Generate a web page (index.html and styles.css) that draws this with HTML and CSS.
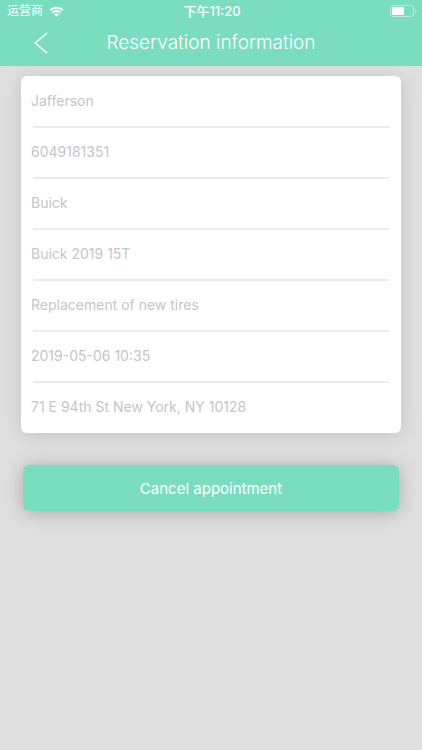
FILE: index.html
```html
<!DOCTYPE html>
<html lang="en">
<head>
    <meta charset="UTF-8">
    <meta name="viewport" content="width=device-width, initial-scale=1.0">
    <title>Reservation information</title>
    <link rel="stylesheet" href="styles.css">
</head>
<body>
    <header class="header">
        <div class="status-bar">
            <div class="carrier">
                <span lang="zh">运营商</span>
                <svg class="wifi" width="15" height="11" viewBox="0 0 15 11" aria-hidden="true">
                    <path d="M7.5 10.8 5.2 8.4a3.3 3.3 0 0 1 4.6 0z" fill="#fff"/>
                    <path d="M3.5 6.7a5.7 5.7 0 0 1 8 0M1.2 4.2a9 9 0 0 1 12.6 0" fill="none" stroke="#fff" stroke-width="2"/>
                </svg>
            </div>
            <div class="clock" lang="zh">下午11:20</div>
            <div class="power">
                <svg width="27" height="12" viewBox="0 0 27 12" aria-hidden="true">
                    <rect x="0.5" y="0.5" width="23" height="11" rx="2.5" fill="none" stroke="#fff" stroke-opacity="0.45"/>
                    <rect x="2" y="2" width="12" height="8" rx="1" fill="#fff"/>
                    <path d="M25 4v4c1 0 1.6-1 1.6-2S26 4 25 4z" fill="#fff" fill-opacity="0.45"/>
                </svg>
            </div>
        </div>
        <div class="nav-bar">
            <button class="back" type="button" aria-label="Back">
                <svg width="14" height="22" viewBox="0 0 14 22" aria-hidden="true">
                    <path d="M13 1 1.2 11 13 21" fill="none" stroke="#fff" stroke-width="1.6"/>
                </svg>
            </button>
            <h1 class="title">Reservation information</h1>
        </div>
    </header>

    <main class="content">
        <form class="reservation">
            <div class="card">
                <div class="field"><input type="text" aria-label="Name" value="Jafferson" readonly></div>
                <div class="field"><input type="text" aria-label="Phone" value="6049181351" readonly></div>
                <div class="field"><input type="text" aria-label="Brand" value="Buick" readonly></div>
                <div class="field"><input type="text" aria-label="Model" value="Buick 2019 15T" readonly></div>
                <div class="field"><input type="text" aria-label="Service" value="Replacement of new tires" readonly></div>
                <div class="field"><input type="text" aria-label="Time" value="2019-05-06 10:35" readonly></div>
                <div class="field"><input type="text" aria-label="Address" value="71 E 94th St New York, NY 10128" readonly></div>
            </div>
            <button class="cancel-btn" type="button">Cancel appointment</button>
        </form>
    </main>
</body>
</html>
```
FILE: styles.css
```css
* { margin: 0; padding: 0; box-sizing: border-box; }
body {
    font-family: Inter, "Noto Sans CJK SC", sans-serif;
    background: #e0e0e0;
    min-height: 100vh;
}
.header {
    background: #7bddc0;
    color: white;
}
.status-bar {
    display: grid;
    grid-template-columns: 1fr auto 1fr;
    align-items: center;
    height: 22px;
    padding: 0 5px 0 7px;
    font-size: 12px;
    line-height: 20px;
}
.carrier {
    display: flex;
    align-items: center;
    gap: 6px;
}
.clock {
    font-size: 13px;
    font-weight: 500;
}
.power {
    display: flex;
    justify-content: flex-end;
}
.nav-bar {
    display: grid;
    grid-template-columns: 68px 1fr 68px;
    align-items: center;
    height: 44px;
    padding-bottom: 2px;
}
.back {
    display: flex;
    justify-content: flex-end;
    padding: 8px 20px 8px 0;
    background: none;
    border: none;
    cursor: pointer;
}
.title {
    font-size: 19px;
    font-weight: 300;
    line-height: 24px;
    text-align: center;
}
.content { padding: 10px 21px; }
.card {
    background: white;
    border-radius: 6px;
    padding: 1px 10px;
    box-shadow: 0 2px 20px rgba(0,0,0,0.14);
}
.field input {
    display: block;
    width: 100%;
    height: 49px;
    padding-bottom: 2px;
    background: none;
    border: none;
    outline: none;
    color: #c5c5ca;
    font: 400 14px Inter, sans-serif;
}
.field:not(:last-child)::after {
    content: "";
    display: block;
    height: 2px;
    margin: 0 2px;
    background: #ebebed;
}
.cancel-btn {
    display: block;
    width: calc(100% - 4px);
    height: 46px;
    margin: 32px 2px 0;
    background: #7bddc0;
    color: white;
    border: none;
    border-radius: 6px;
    box-shadow: 0 2px 20px rgba(0,0,0,0.25);
    font: 400 15px Inter, sans-serif;
    cursor: pointer;
}
```
